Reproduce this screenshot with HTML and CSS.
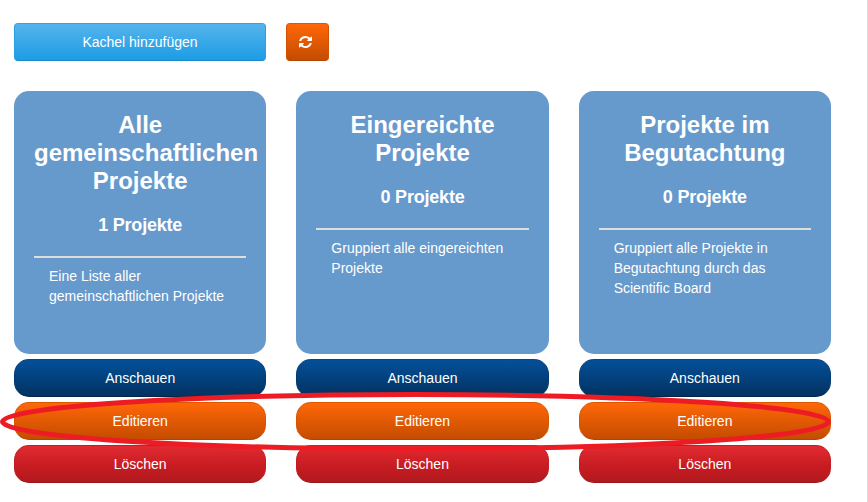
FILE: index.html
```html
<!DOCTYPE html>
<html lang="de">
<head>
<meta charset="utf-8">
<title>Projekte</title>
<link rel="stylesheet" href="styles.css">
</head>
<body>
<main class="page">
  <div class="toolbar">
    <button class="btn btn-add">Kachel hinzufügen</button>
    <button class="btn btn-refresh" aria-label="Aktualisieren"><svg class="icon" viewBox="0 0 1536 1536" preserveAspectRatio="none"><path d="M1511 928q0 5-1 7-64 268-268 434.500t-478 166.500q-146 0-282.500-55t-243.500-157l-129 129q-19 19-45 19t-45-19-19-45v-448q0-26 19-45t45-19h448q26 0 45 19t19 45-19 45l-137 137q71 66 161 102t187 36q134 0 250-65t186-179q11-17 53-117 8-23 30-23h192q13 0 22.500 9.500t9.500 22.500zm25-800v448q0 26-19 45t-45 19h-448q-26 0-45-19t-19-45 19-45l138-138q-148-137-349-137-134 0-250 65t-186 179q-11 17-53 117-8 23-30 23h-199q-13 0-22.500-9.500t-9.500-22.500v-7q65-268 270-434.500t480-166.500q146 0 284 55.500t245 156.500l130-129q19-19 45-19t45 19 19 45z"/></svg></button>
  </div>
  <div class="tiles">
    <section class="tile">
      <div class="card">
        <h3>Alle gemeinschaftlichen Projekte</h3>
        <h4>1 Projekte</h4>
        <p>Eine Liste aller gemeinschaftlichen Projekte</p>
      </div>
      <button class="btn pill btn-view">Anschauen</button>
      <button class="btn pill btn-edit">Editieren</button>
      <button class="btn pill btn-delete">Löschen</button>
    </section>
    <section class="tile">
      <div class="card">
        <h3>Eingereichte Projekte</h3>
        <h4>0 Projekte</h4>
        <p>Gruppiert alle eingereichten Projekte</p>
      </div>
      <button class="btn pill btn-view">Anschauen</button>
      <button class="btn pill btn-edit">Editieren</button>
      <button class="btn pill btn-delete">Löschen</button>
    </section>
    <section class="tile">
      <div class="card">
        <h3>Projekte im Begutachtung</h3>
        <h4>0 Projekte</h4>
        <p>Gruppiert alle Projekte in Begutachtung durch das Scientific Board</p>
      </div>
      <button class="btn pill btn-view">Anschauen</button>
      <button class="btn pill btn-edit">Editieren</button>
      <button class="btn pill btn-delete">Löschen</button>
    </section>
  </div>
  <svg class="marker" viewBox="0 0 868 70"><ellipse cx="415.500" cy="36.700" rx="413" ry="27.200"/></svg>
</main>
</body>
</html>
```
FILE: styles.css
```css
* { box-sizing: border-box; }
body {
  margin: 0;
  background: #fff;
  font: 14px/20px "Liberation Sans", Arial, sans-serif;
  color: #fff;
}
.page {
  position: relative;
  height: 502px;
  padding: 23px 36px 0 14px;
  border-right: 1px solid #ddd;
  overflow: hidden;
}
.toolbar { display: flex; gap: 20px; }
.btn {
  display: flex;
  align-items: center;
  justify-content: center;
  height: 38px;
  padding: 0;
  border: 1px solid;
  border-radius: 4px;
  color: #fff;
  font: inherit;
}
.btn-add {
  width: 252px;
  background: linear-gradient(#54b4eb, #1d9ce5);
  border-color: #2fa4e7 #2a9fe2 #178acc;
}
.btn-refresh {
  width: 43px;
  background: linear-gradient(#ff6707, #c44c00);
  border-color: #dd5600 #d05100 #b34600;
}
.icon {
  width: 13px;
  height: 12px;
  margin-right: 5px;
  fill: #fff;
}
.tiles {
  display: grid;
  grid-template-columns: repeat(3, 1fr);
  gap: 30px;
  margin-top: 30px;
}
.tile {
  display: flex;
  flex-direction: column;
  gap: 5px;
  min-width: 0;
}
.card {
  height: 263px;
  padding: 20px;
  border-radius: 15px;
  background: #6699cc;
}
h3 {
  margin: 0;
  font-size: 24px;
  line-height: 28px;
  text-align: center;
}
h4 {
  margin: 20px 0 21px;
  font-size: 18px;
  line-height: 20px;
  letter-spacing: -0.2px;
  text-align: center;
}
p {
  margin: 0;
  padding: 8px 15px 0;
  border-top: 2px solid #ddd;
}
.pill { border-radius: 15px; }
.btn-view {
  background: linear-gradient(#03509a, #033260);
  border-color: #034481 #033c73 #02254a;
}
.btn-edit {
  background: linear-gradient(#ff6707, #c44c00);
  border-color: #dd5600 #d85500 #b34600;
}
.btn-delete {
  background: linear-gradient(#e12b31, #c71c22 55%, #b2191e);
  border-color: #c71c22 #c01c22 #9a161a;
}
.marker {
  position: absolute;
  top: 385px;
  left: 0;
  width: 868px;
  height: 70px;
  pointer-events: none;
}
.marker ellipse {
  fill: none;
  stroke: #ed1c24;
  stroke-width: 5;
}
```
